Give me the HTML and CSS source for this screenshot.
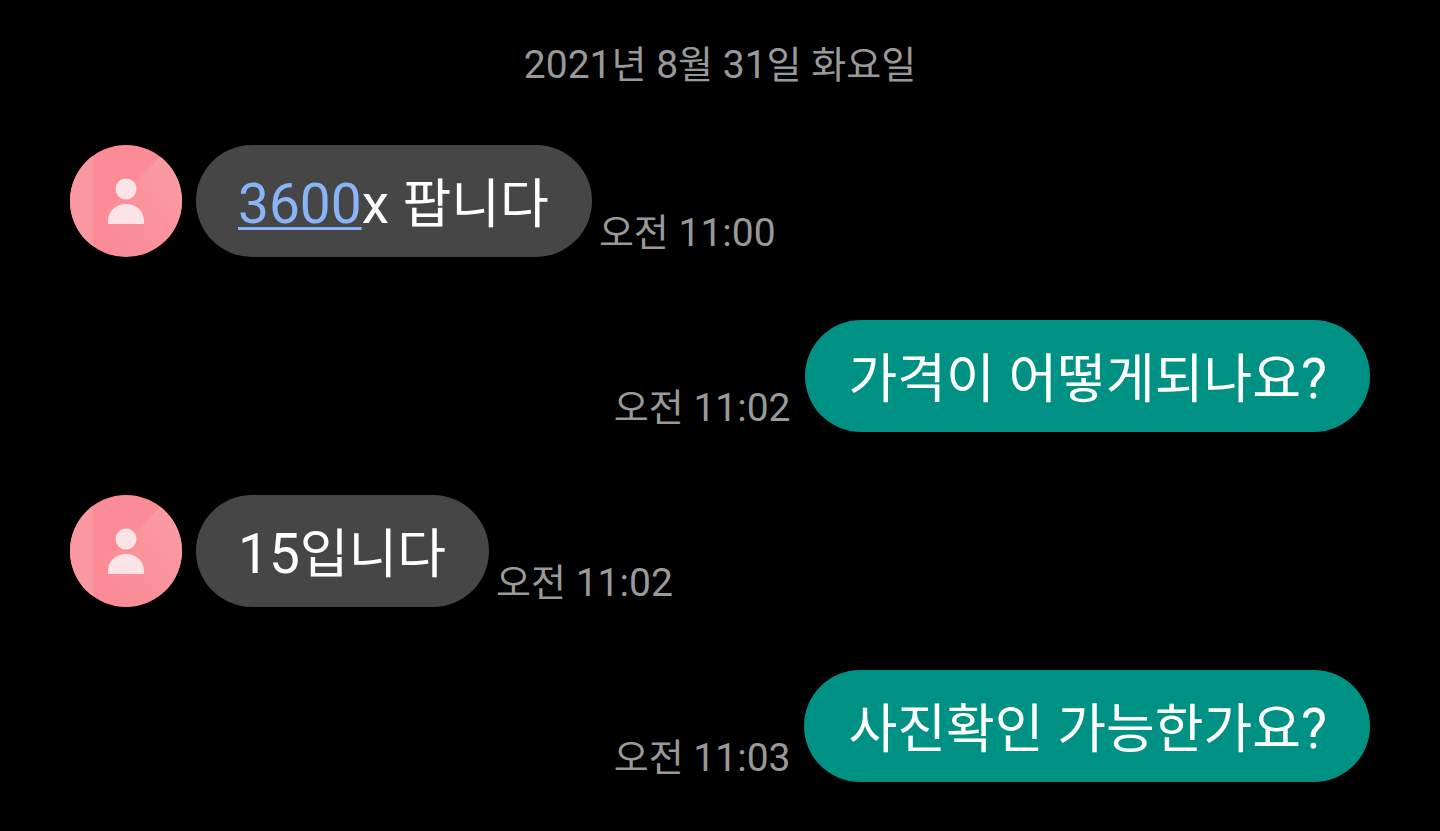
FILE: index.html
```html
<!DOCTYPE html>
<html lang="ko">
<head>
    <meta charset="UTF-8">
    <meta name="viewport" content="width=device-width, initial-scale=1.0">
    <title>메시지</title>
    <link rel="stylesheet" href="styles.css">
</head>
<body>
    <svg class="defs" aria-hidden="true">
        <linearGradient id="fold" x1="0" y1="1" x2="1" y2="0">
            <stop offset="0.2" stop-color="#f99aa1" stop-opacity="0"/>
            <stop offset="0.8" stop-color="#f99aa1"/>
        </linearGradient>
        <clipPath id="circle"><circle cx="56" cy="56" r="56"/></clipPath>
        <symbol id="avatar" viewBox="0 0 112 112">
            <g clip-path="url(#circle)">
                <rect width="112" height="112" fill="#fb8b94"/>
                <rect width="23" height="112" fill="#f998a1"/>
                <path d="M112 0L90 12L23 80V112H112Z" fill="url(#fold)"/>
            </g>
            <circle cx="56" cy="44" r="10.5" fill="#fbe4e7"/>
            <path d="M38 79V76C38 66 46 59 56 59S74 66 74 76V79Z" fill="#fbe4e7"/>
        </symbol>
    </svg>

    <main class="chat">
        <h1 class="date"><span class="latin">2021</span>년<span class="latin"> 8</span>월<span class="latin"> 31</span>일<span class="latin"> </span>화요일</h1>

        <div class="message received">
            <svg class="avatar" aria-hidden="true"><use href="#avatar"/></svg>
            <p class="bubble"><span class="latin"><a href="tel:3600">3600</a>x </span>팝니다</p>
            <time class="time">오전<span class="latin"> 11:00</span></time>
        </div>

        <div class="message sent">
            <time class="time">오전<span class="latin"> 11:02</span></time>
            <p class="bubble">가격이<span class="latin"> </span>어떻게되나요<span class="latin">?</span></p>
        </div>

        <div class="message received">
            <svg class="avatar" aria-hidden="true"><use href="#avatar"/></svg>
            <p class="bubble"><span class="latin">15</span>입니다</p>
            <time class="time">오전<span class="latin"> 11:02</span></time>
        </div>

        <div class="message sent">
            <time class="time">오전<span class="latin"> 11:03</span></time>
            <p class="bubble">사진확인<span class="latin"> </span>가능한가요<span class="latin">?</span></p>
        </div>
    </main>
</body>
</html>
```

FILE: styles.css
```css
body {
    margin: 0;
    background-color: #000;
    color: #fff;
    font-family: Roboto, 'Noto Sans CJK KR', sans-serif;
}
.defs {
    position: absolute;
    width: 0;
    height: 0;
}
.chat {
    display: flex;
    flex-direction: column;
    padding: 41px 70px 49px;
}
.date {
    margin: 0 0 56px;
    text-align: center;
    font-size: 38px;
    font-weight: 400;
    line-height: 48px;
    color: #999;
}
/* digits run a little larger than the hangul */
.latin {
    font-size: 39px;
}
.message {
    display: flex;
    align-items: flex-end;
    margin-bottom: 63px;
}
.message:last-child {
    margin-bottom: 0;
}
.sent {
    justify-content: flex-end;
}
.avatar {
    flex: none;
    width: 112px;
    height: 112px;
    margin-right: 14px;
}
.bubble {
    box-sizing: border-box;
    min-height: 112px;
    margin: 0;
    padding: 23px 43px 16px 42px;
    border-radius: 56px;
    font-size: 53px;
    line-height: 72px;
}
.bubble .latin {
    font-size: 55px;
}
.received .bubble {
    background-color: #464646;
}
.sent .bubble {
    background-color: #009185;
    padding-left: 44px;
}
.bubble a {
    color: #8ab4f8;
    text-decoration-thickness: 3px;
    text-underline-offset: 4px;
}
.time {
    height: 48px;
    font-size: 38px;
    line-height: 48px;
    color: #999;
}
.received .time {
    margin-left: 7px;
}
.sent .time {
    margin-right: 14px;
}
```
